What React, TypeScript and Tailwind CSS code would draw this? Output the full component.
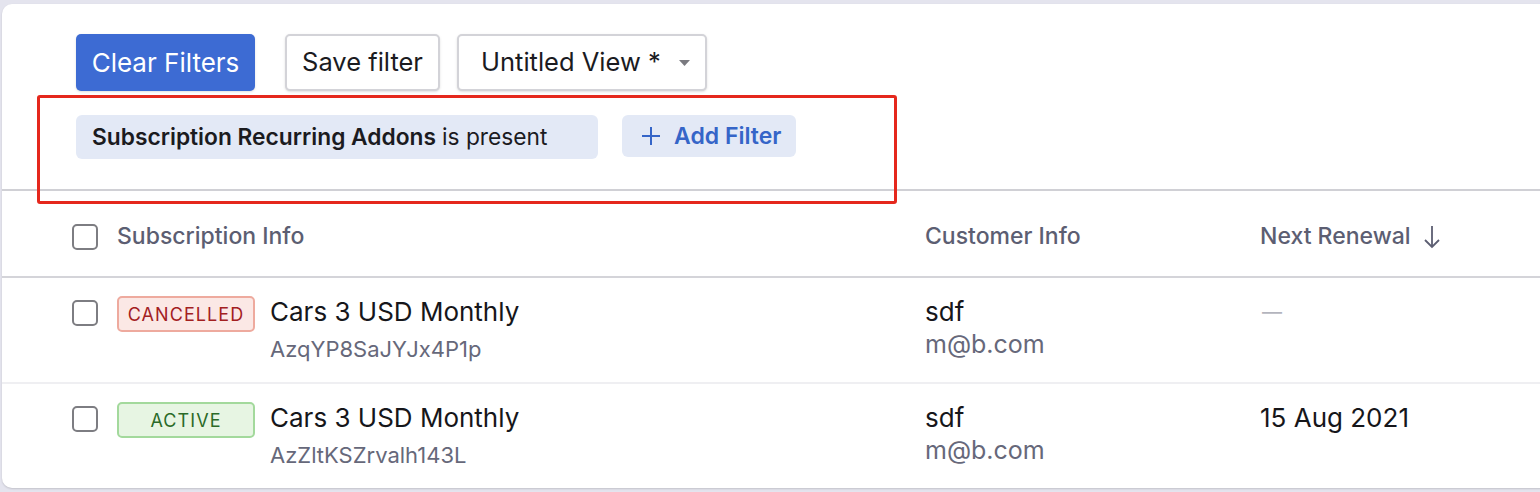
function Checkbox() {
  return (
    <span className="block h-[26px] w-[26px] rounded-[5px] border-2 border-[#7d7d82] bg-white" />
  );
}

function Badge({ tone, label }: { tone: "red" | "green"; label: string }) {
  const styles =
    tone === "red"
      ? "border-[#eeaa9e] bg-[#fbe8e5] text-[#a3201f]"
      : "border-[#a3d99c] bg-[#e7f5e3] text-[#2b6a28]";
  return (
    <span
      className={`flex h-[36px] w-[138px] shrink-0 items-center justify-center rounded-[5px] border-2 text-[18px] tracking-[0.06em] ${styles}`}
    >
      {label}
    </span>
  );
}

type Row = {
  status: "red" | "green";
  label: string;
  plan: string;
  id: string;
  name: string;
  email: string;
  renewal: string | null;
};

const rows: Row[] = [
  {
    status: "red",
    label: "CANCELLED",
    plan: "Cars 3 USD Monthly",
    id: "AzqYP8SaJYJx4P1p",
    name: "sdf",
    email: "m@b.com",
    renewal: null,
  },
  {
    status: "green",
    label: "ACTIVE",
    plan: "Cars 3 USD Monthly",
    id: "AzZltKSZrvalh143L",
    name: "sdf",
    email: "m@b.com",
    renewal: "15 Aug 2021",
  },
];

export default function App() {
  return (
    <div className="relative h-[492px] w-[1540px] overflow-hidden bg-[#e4e4ee] font-[Inter,'Liberation_Sans',sans-serif]">
      <div className="ml-[2px] mt-[4px] h-[484px] w-[1560px] rounded-l-[10px] bg-white shadow-[0_1px_2px_rgba(0,0,0,0.15)]">
        {/* toolbar */}
        <div className="flex items-center pl-[74px] pt-[30px]">
          <button className="h-[57px] w-[179px] rounded-[5px] bg-[#3d6bd3] text-[26px] text-white shadow-sm">
            Clear Filters
          </button>
          <button className="ml-[30px] h-[57px] w-[155px] rounded-[5px] border-2 border-[#d3d3d8] bg-white text-[25.5px] text-[#1b1b1f] shadow-sm">
            Save filter
          </button>
          <button className="ml-[17px] flex h-[57px] w-[250px] items-center rounded-[5px] border-2 border-[#d3d3d8] bg-white pl-[22px] text-[25.5px] text-[#1b1b1f] shadow-sm">
            <span>Untitled View *</span>
            <svg className="ml-[18px]" width="11" height="6" viewBox="0 0 11 6">
              <path d="M0 0h11L5.5 6z" fill="#7a7a80" />
            </svg>
          </button>
        </div>

        {/* filters */}
        <div className="flex items-start pl-[74px] pt-[24px]">
          <div className="flex h-[44px] w-[522px] items-center rounded-[6px] bg-[#e3e9f6] pl-[16px] text-[22.75px] text-[#1b1b1f]">
            <span className="font-semibold">Subscription Recurring Addons</span>
            <span className="ml-[6px]">is present</span>
          </div>
          <button className="ml-[24px] flex h-[42px] w-[174px] items-center rounded-[6px] bg-[#e3e9f6] pl-[19px] text-[23px] font-semibold text-[#3565c8]">
            <svg width="20" height="20" viewBox="0 0 20 20" className="mr-[13px]">
              <path d="M10 1v18M1 10h18" stroke="#3565c8" strokeWidth="2" />
            </svg>
            Add Filter
          </button>
        </div>

        <div className="mt-[30px] h-[2px] bg-[#d0d0d5]" />

        {/* header */}
        <div className="flex h-[85px] items-center pl-[70px] pt-[6px] text-[23px] font-medium text-[#5c5e72]">
          <div className="w-[45px]">
            <Checkbox />
          </div>
          <div className="w-[808px]">Subscription Info</div>
          <div className="w-[335px]">Customer Info</div>
          <div className="flex items-center">
            Next Renewal
            <svg width="18" height="24" viewBox="0 0 18 24" className="ml-[12px]">
              <path d="M9 1v21M2 15l7 7 7-7" stroke="#5c5e72" strokeWidth="1.8" fill="none" />
            </svg>
          </div>
        </div>
        <div className="h-[2px] bg-[#d4d4d9]" />

        {rows.map((r, i) => (
          <div key={i}>
            {i > 0 && <div className="h-[2px] bg-[#efeff2]" />}
            <div className="flex h-[104px] items-start pl-[70px] pt-[18px]">
              <div className="w-[45px] pt-[4px]">
                <Checkbox />
              </div>
              <div className="flex w-[808px] items-start">
                <Badge tone={r.status} label={r.label} />
                <div className="-mt-[2px] ml-[15px]">
                  <div className="text-[26px] leading-[36px] text-[#16161a]">{r.plan}</div>
                  <div className="text-[22px] leading-[38px] text-[#66687a]">{r.id}</div>
                </div>
              </div>
              <div className="-mt-[2px] w-[335px]">
                <div className="text-[26px] leading-[36px] text-[#16161a]">{r.name}</div>
                <div className="text-[25px] leading-[28px] text-[#66687a]">{r.email}</div>
              </div>
              <div className="-mt-[2px]">
                {r.renewal ? (
                  <div className="text-[26px] leading-[36px] text-[#16161a]">{r.renewal}</div>
                ) : (
                  <div className="pl-[2px] text-[20px] leading-[36px] text-[#b3b4bd]">—</div>
                )}
              </div>
            </div>
          </div>
        ))}
      </div>

      {/* annotation */}
      <div className="absolute left-[37px] top-[95px] h-[109px] w-[860px] rounded-[3px] border-[3px] border-[#e5281d]" />
    </div>
  );
}
